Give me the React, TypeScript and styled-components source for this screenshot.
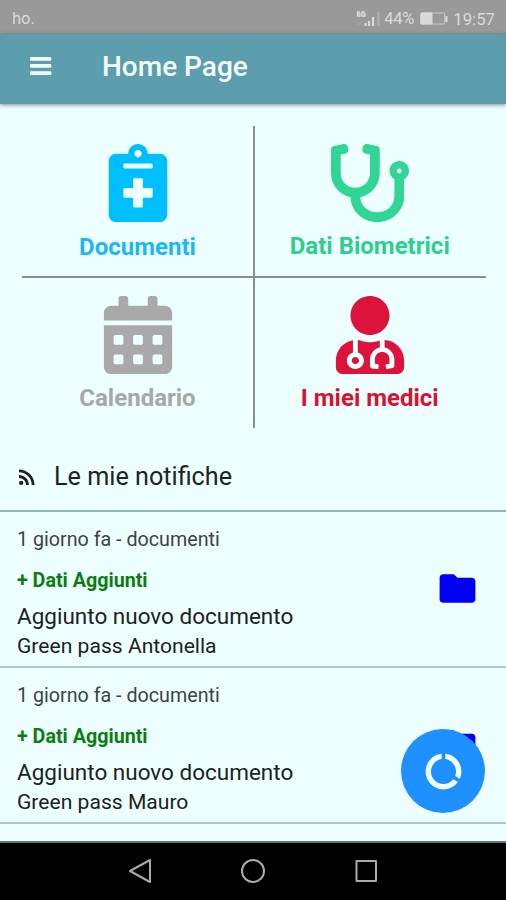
import React from "react";
import styled, { createGlobalStyle } from "styled-components";
import { FaCalendarAlt, FaNotesMedical, FaStethoscope, FaUserMd } from "react-icons/fa";
import { MdDataUsage, MdFolder, MdRssFeed } from "react-icons/md";

const GlobalStyle = createGlobalStyle`
  * { box-sizing: border-box; }
  body { margin: 0; font-family: Roboto, "Liberation Sans", sans-serif; }
`;

const Screen = styled.div`
  position: relative;
  display: flex;
  flex-direction: column;
  width: 506px;
  height: 900px;
  overflow: hidden;
  background: #edffff;
`;

const StatusBar = styled.div`
  display: flex;
  flex: none;
  align-items: center;
  justify-content: space-between;
  height: 34px;
  padding: 3px 11px 0 12px;
  background: #999;
  color: #dadada;
  font-size: 17px;
`;

const StatusGroup = styled.div`
  display: flex;
  align-items: center;
`;

const Carrier = styled.span`
  font-size: 16.5px;
`;

const Percent = styled.span`
  width: 31px;
  margin-left: 3px;
  font-size: 16.5px;
  letter-spacing: -0.2px;
`;

const Clock = styled.span`
  margin-left: 5px;
  font-size: 16.8px;
`;

const Battery = styled.svg`
  margin-left: 5px;
`;

const AppBar = styled.header`
  display: flex;
  flex: none;
  align-items: center;
  height: 70px;
  padding: 0 30px 5px;
  gap: 50px;
  background: #5c9dae;
  color: #f2ffff;
  box-shadow: 0 1px 4px rgba(0, 0, 0, 0.45);

  > svg { margin-top: -2px; }
`;

const Title = styled.h1`
  margin: 0;
  font-size: 28px;
  font-weight: 500;
  line-height: 36px;
`;

const Menu = styled.nav`
  display: grid;
  flex: none;
  grid-template-columns: 233px 231px;
  grid-template-rows: 152px 150px;
  margin: 22px 20px 0 22px;
`;

const Tile = styled.a<{ $color: string; $right?: boolean; $lower?: boolean }>`
  display: flex;
  flex-direction: column;
  align-items: center;
  padding-top: 18px;
  padding-right: ${(p) => (p.$right ? 1.5 : 0)}px;
  color: ${(p) => p.$color};
  border-right: ${(p) => (p.$right ? "none" : "2px solid #86908f")};
  border-bottom: ${(p) => (p.$lower ? "none" : "2px solid #86908f")};

  svg { display: block; height: 78px; width: auto; }
`;

const TileLabel = styled.span<{ $color: string; $top: number }>`
  margin-top: ${(p) => p.$top}px;
  color: ${(p) => p.$color};
  font-size: 24px;
  font-weight: 700;
  line-height: 28px;
  white-space: nowrap;
`;

const SectionHead = styled.div`
  display: flex;
  flex: none;
  align-items: center;
  height: 84px;
  padding: 16px 16px 0 15px;
  gap: 15px;
  color: #1c2424;
  border-bottom: 2px solid #92b3c6;
`;

const SectionTitle = styled.h2`
  margin: 0;
  font-size: 25.2px;
  font-weight: 400;
  line-height: 30px;
`;

const Notice = styled.article`
  display: flex;
  flex: none;
  align-items: center;
  justify-content: space-between;
  height: 156px;
  padding: 0 27px 0 17px;
  color: #1b2222;
  border-bottom: 2px solid #abc7ca;

  > svg { margin-top: -1px; }
`;

const NoticeText = styled.div`
  display: flex;
  flex-direction: column;
  align-self: flex-start;
  padding-top: 14px;
`;

const Meta = styled.span`
  font-size: 19.7px;
  line-height: 28px;
  color: #3b4444;
`;

const Kind = styled.span`
  margin-top: 13px;
  font-size: 19.7px;
  font-weight: 700;
  line-height: 28px;
  color: #0b7d10;
`;

const Headline = styled.span`
  margin-top: 6px;
  font-size: 22.5px;
  line-height: 30px;
`;

const Detail = styled.span`
  font-size: 21.1px;
  line-height: 30px;
`;

const Fab = styled.button`
  position: absolute;
  left: 401px;
  top: 729px;
  display: grid;
  place-items: center;
  width: 84px;
  height: 84px;
  padding: 0;
  border: 0;
  border-radius: 50%;
  background: #1e90ff;
  color: #f0ffff;
`;

const SystemBar = styled.footer`
  display: flex;
  align-items: center;
  justify-content: center;
  gap: 88px;
  height: 59px;
  margin-top: auto;
  padding-bottom: 2px;
  flex: none;
  border-top: 2px solid #6c7272;
  background: #000;

  svg { fill: none; stroke: #aaa; stroke-width: 2; }
`;

const notices = ["Green pass Antonella", "Green pass Mauro"];

const tiles = [
  { label: "Documenti", color: "#00bfff", text: "#1bb8f2", Icon: FaNotesMedical, top: 11 },
  { label: "Dati Biometrici", color: "#31d695", text: "#2dcf90", Icon: FaStethoscope, top: 10 },
  { label: "Calendario", color: "#a9a9a9", text: "#a5a9a9", Icon: FaCalendarAlt, top: 10 },
  { label: "I miei medici", color: "#dc143c", text: "#dc1030", Icon: FaUserMd, top: 10 },
];

export default function App() {
  return (
    <Screen>
      <GlobalStyle />
      <StatusBar>
        <Carrier>ho.</Carrier>
        <StatusGroup>
          <svg width="26" height="18" viewBox="0 0 26 18" fill="none" stroke="#dadada">
            <path d="M5 2H2.500v4H5V4H2.500M10 2H7v4h3V4H8.500" strokeWidth="1.4" />
            <path d="M10.500 16v-3M14 16v-5M18 16V7" strokeWidth="2.200" />
            <path d="M23.500 16V2" strokeWidth="2.500" opacity=".3" />
            <path d="M2 14h5" opacity=".3" />
          </svg>
          <Percent>44%</Percent>
          <Battery width="28" height="14" viewBox="0 0 28 14" fill="none" stroke="#dadada">
            <rect x=".7" y="1" width="24" height="11" rx="1" strokeWidth="1" opacity=".75" />
            <path d="M1 1h11v11H1z" fill="#dadada" />
            <path d="M26.500 4v6" strokeWidth="2" />
          </Battery>
          <Clock>19:57</Clock>
        </StatusGroup>
      </StatusBar>
      <AppBar>
        <svg width="22" height="18" viewBox="0 0 22 18" fill="currentColor">
          <rect width="21.300" height="3.700" rx="1" />
          <rect y="7.100" width="21.300" height="3.700" rx="1" />
          <rect y="14.200" width="21.300" height="3.700" rx="1" />
        </svg>
        <Title>Home Page</Title>
      </AppBar>
      <Menu>
        {tiles.map(({ label, color, text, Icon, top }, i) => (
          <Tile key={label} $color={color} $right={i % 2 === 1} $lower={i > 1}>
            <Icon />
            <TileLabel $color={text} $top={top}>{label}</TileLabel>
          </Tile>
        ))}
      </Menu>
      <SectionHead>
        <MdRssFeed size={24} />
        <SectionTitle>Le mie notifiche</SectionTitle>
      </SectionHead>
      {notices.map((detail) => (
        <Notice key={detail}>
          <NoticeText>
            <Meta>1 giorno fa - documenti</Meta>
            <Kind>+ Dati Aggiunti</Kind>
            <Headline>Aggiunto nuovo documento</Headline>
            <Detail>{detail}</Detail>
          </NoticeText>
          <MdFolder size={43} color="#0000f5" />
        </Notice>
      ))}
      <Fab aria-label="Statistiche">
        <MdDataUsage size={43} />
      </Fab>
      <SystemBar>
        <svg width="24" height="26" viewBox="0 0 24 26"><path d="M22 2v22L2 13z" strokeLinejoin="round" /></svg>
        <svg width="26" height="26" viewBox="0 0 26 26"><circle cx="13" cy="13" r="11" /></svg>
        <svg width="24" height="24" viewBox="0 0 24 24"><path d="M2.500 2h19.500v20H2.500z" strokeLinejoin="round" /></svg>
      </SystemBar>
    </Screen>
  );
}
